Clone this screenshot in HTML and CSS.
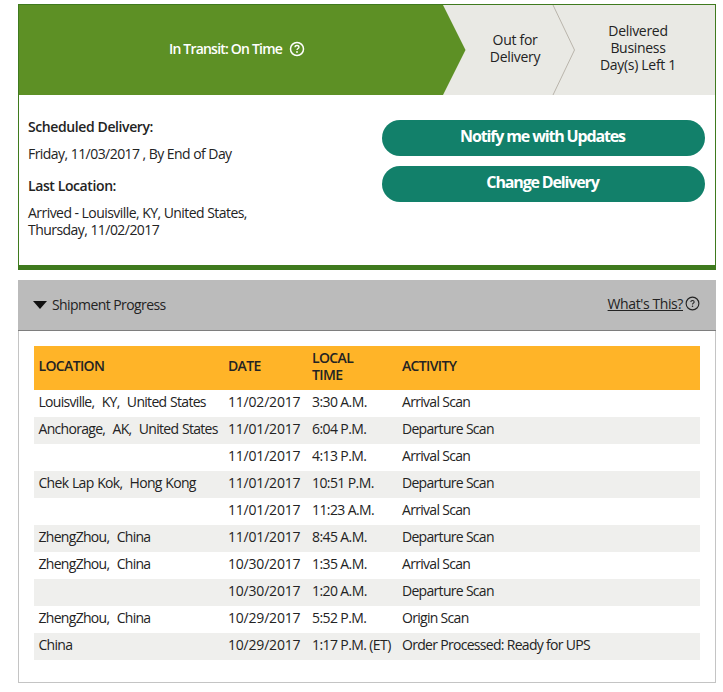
FILE: index.html
```html
<!DOCTYPE html>
<html lang="en">
<head>
<meta charset="utf-8">
<title>Shipment tracking</title>
<link rel="stylesheet" href="styles.css">
</head>
<body>
<section class="status-card">
  <div class="tracker">
    <svg class="chevrons" width="697" height="90" viewBox="0 0 697 90" aria-hidden="true">
      <path d="M0 0H424L446.500 45L424 90H0Z" fill="#5d9025"/>
      <path d="M534 0L555.500 45L534 90" fill="none" stroke="#b9b4ab" stroke-width="1"/>
    </svg>
    <div class="step step-current">
      <span>In Transit: On Time</span>
      <svg class="help help-light" width="16" height="16" viewBox="0 0 16 16" aria-hidden="true">
        <circle cx="8" cy="8" r="6.500" fill="none" stroke="currentColor" stroke-width="1.500"/>
        <path d="M6 6.300C6 5 7 4.500 8 4.500S10 5.200 10 6.200C10 7.500 8 7.600 8 9" fill="none" stroke="currentColor" stroke-width="1.300"/>
        <circle cx="8" cy="11" r="0.900" fill="currentColor"/>
      </svg>
    </div>
    <div class="step step-next">Out for<br>Delivery</div>
    <div class="step step-last">Delivered<br>Business<br>Day(s) Left 1</div>
  </div>
  <div class="details">
    <div class="info">
      <h3>Scheduled Delivery:</h3>
      <p>Friday, 11/03/2017 , By End of Day</p>
      <h3>Last Location:</h3>
      <p>Arrived - Louisville, KY, United States,<br>Thursday, 11/02/2017</p>
    </div>
    <div class="actions">
      <a class="btn">Notify me with Updates</a>
      <a class="btn">Change Delivery</a>
    </div>
  </div>
</section>
<section class="progress">
  <header class="progress-head">
    <div class="progress-title"><span class="caret"></span>Shipment Progress</div>
    <div class="whats">
      <a>What's This?</a>
      <svg class="help" width="15" height="15" viewBox="0 0 16 16" aria-hidden="true">
        <circle cx="8" cy="8" r="6.800" fill="none" stroke="currentColor" stroke-width="1.200"/>
        <path d="M6.200 6.400C6.200 5.300 7 4.800 8 4.800S9.800 5.400 9.800 6.300C9.800 7.500 8 7.600 8 9" fill="none" stroke="currentColor" stroke-width="1.100"/>
        <circle cx="8" cy="11" r="0.800" fill="currentColor"/>
      </svg>
    </div>
  </header>
  <div class="progress-body">
    <table>
      <thead>
        <tr><th class="c1">LOCATION</th><th class="c2">DATE</th><th class="c3">LOCAL<br>TIME</th><th>ACTIVITY</th></tr>
      </thead>
      <tbody>
        <tr><td>Louisville, &nbsp;KY, &nbsp;United States</td><td>11/02/2017</td><td>3:30 A.M.</td><td>Arrival Scan</td></tr>
        <tr><td>Anchorage, &nbsp;AK, &nbsp;United States</td><td>11/01/2017</td><td>6:04 P.M.</td><td>Departure Scan</td></tr>
        <tr><td></td><td>11/01/2017</td><td>4:13 P.M.</td><td>Arrival Scan</td></tr>
        <tr><td>Chek Lap Kok, &nbsp;Hong Kong</td><td>11/01/2017</td><td>10:51 P.M.</td><td>Departure Scan</td></tr>
        <tr><td></td><td>11/01/2017</td><td>11:23 A.M.</td><td>Arrival Scan</td></tr>
        <tr><td>ZhengZhou, &nbsp;China</td><td>11/01/2017</td><td>8:45 A.M.</td><td>Departure Scan</td></tr>
        <tr><td>ZhengZhou, &nbsp;China</td><td>10/30/2017</td><td>1:35 A.M.</td><td>Arrival Scan</td></tr>
        <tr><td></td><td>10/30/2017</td><td>1:20 A.M.</td><td>Departure Scan</td></tr>
        <tr><td>ZhengZhou, &nbsp;China</td><td>10/29/2017</td><td>5:52 P.M.</td><td>Origin Scan</td></tr>
        <tr><td>China</td><td>10/29/2017</td><td>1:17 P.M. (ET)</td><td>Order Processed: Ready for UPS</td></tr>
      </tbody>
    </table>
  </div>
</section>
</body>
</html>
```

FILE: styles.css
```css
* { box-sizing: border-box; }
html, body { background: #fff; }
body {
  margin: 0;
  padding: 4px 7px 8px 18px;
  font-family: "Open Sans", "Liberation Sans", sans-serif;
  font-size: 14px;
  letter-spacing: -0.4px;
  color: #232323;
}
.status-card {
  border: 1px solid #3f7a1e;
  border-bottom-width: 5px;
  height: 266px;
  margin-bottom: 10px;
}
.tracker {
  position: relative;
  display: flex;
  height: 90px;
  padding-bottom: 5px;
  background: #e9e9e4;
  text-align: center;
  line-height: 17px;
  letter-spacing: -0.3px;
}
.chevrons { position: absolute; left: 0; top: 0; }
.step {
  position: relative;
  display: flex;
  align-items: center;
  justify-content: center;
}
.step-current {
  width: 424px;
  gap: 7px;
  color: #fff;
  padding: 2px 0 0 12px;
  font-weight: 600;
  letter-spacing: -0.8px;
}
.step-next { width: 144px; }
.step-last { flex: 1; padding-right: 26px; }
.help { display: block; flex: none; }
.help-light { color: #fff; }
.details {
  display: flex;
  justify-content: space-between;
  padding: 23px 10px 0 9px;
}
.info h3 {
  margin: 0 0 10px;
  font-size: 14px;
  font-weight: 600;
  line-height: 17px;
}
.info p {
  margin: 0 0 15px;
  line-height: 17px;
  letter-spacing: -0.55px;
}
.actions {
  display: flex;
  flex-direction: column;
  gap: 10px;
  width: 323px;
  margin-top: 2px;
}
.btn {
  display: block;
  height: 36px;
  padding-right: 2px;
  border-radius: 18px;
  background: #12806a;
  color: #fff;
  font-size: 16px;
  font-weight: 700;
  letter-spacing: -1.15px;
  line-height: 33px;
  text-align: center;
}
.progress {
  border: 1px solid #c4c4c4;
  border-top: 0;
  height: 403px;
}
.progress-head {
  display: flex;
  justify-content: space-between;
  align-items: center;
  height: 51px;
  background: #bbb;
  border-bottom: 1px solid #7e7e7e;
  padding: 0 16px 3px 15px;
  margin: 0 -1px;
}
.progress-title {
  display: flex;
  align-items: center;
  gap: 5px;
  padding-top: 2px;
  letter-spacing: -0.58px;
}
.caret {
  width: 0;
  height: 0;
  border-left: 7.500px solid transparent;
  border-right: 7.500px solid transparent;
  border-top: 8px solid #111;
}
.whats { display: flex; align-items: center; gap: 2px; }
.whats a { text-decoration: underline; }
.progress-body { padding: 15px 15px 0; }
table {
  width: 100%;
  border-collapse: collapse;
  table-layout: fixed;
}
th {
  background: #ffb428;
  height: 44px;
  padding: 0 5px 5px;
  text-align: left;
  font-weight: 600;
  line-height: 17px;
  letter-spacing: -0.65px;
}
td {
  height: 27px;
  padding: 0 5px 5px;
  white-space: nowrap;
  line-height: 17px;
  letter-spacing: -0.7px;
}
td:first-child { word-spacing: 0.7px; }
td:nth-child(2) { letter-spacing: -0.2px; }
td:nth-child(3) { letter-spacing: -0.6px; }
th:first-child, td:first-child { padding-left: 4.500px; }
tbody tr:nth-child(even) td { background: #efefed; }
.c1 { width: 189px; }
.c2 { width: 84px; }
.c3 { width: 90px; }
```
